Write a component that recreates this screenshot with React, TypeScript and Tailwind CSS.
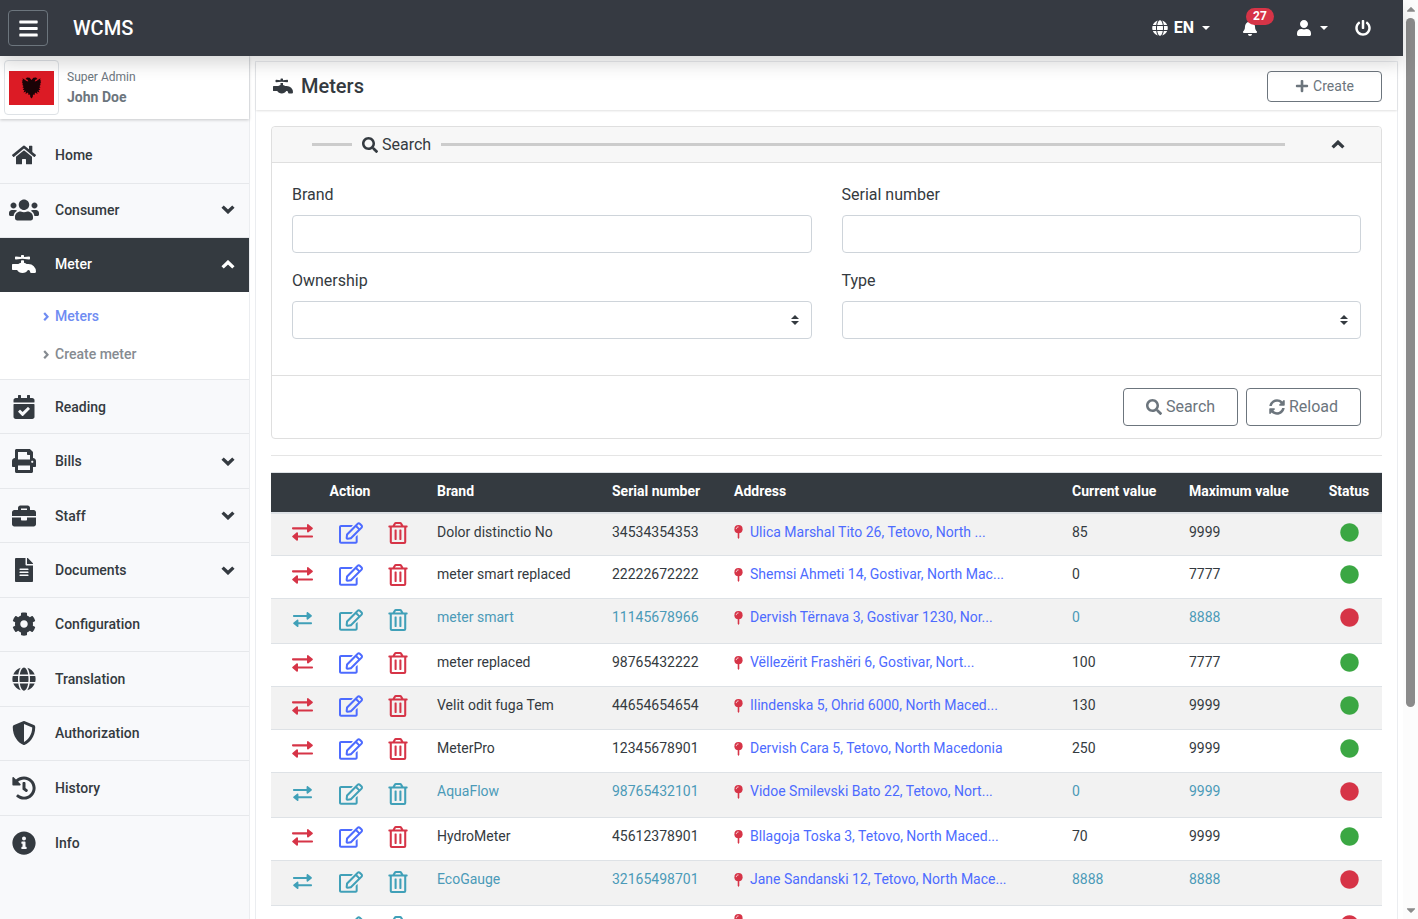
import type { ReactNode } from 'react';
import type { IconType } from 'react-icons';
import {
  FaBars, FaBell, FaBriefcase, FaCalendarCheck, FaCaretDown, FaCaretUp,
  FaCircle, FaCog, FaFaucet, FaFileAlt, FaGlobe, FaHistory, FaHome, FaInfoCircle, FaPlus,
  FaPowerOff, FaPrint, FaRegEdit, FaRegTrashAlt, FaSearch, FaShieldAlt, FaSyncAlt, FaUser, FaUsers,
} from 'react-icons/fa';

type Meter = {
  brand: string;
  serial: string;
  address: string;
  current: string;
  max: string;
  active: boolean;
};

const meters: Meter[] = [
  { brand: 'Dolor distinctio No', serial: '34534354353', address: 'Ulica Marshal Tito 26, Tetovo, North ...', current: '85', max: '9999', active: true },
  { brand: 'meter smart replaced', serial: '22222672222', address: 'Shemsi Ahmeti 14, Gostivar, North Mac...', current: '0', max: '7777', active: true },
  { brand: 'meter smart', serial: '11145678966', address: 'Dervish Tërnava 3, Gostivar 1230, Nor...', current: '0', max: '8888', active: false },
  { brand: 'meter replaced', serial: '98765432222', address: 'Vëllezërit Frashëri 6, Gostivar, Nort...', current: '100', max: '7777', active: true },
  { brand: 'Velit odit fuga Tem', serial: '44654654654', address: 'Ilindenska 5, Ohrid 6000, North Maced...', current: '130', max: '9999', active: true },
  { brand: 'MeterPro', serial: '12345678901', address: 'Dervish Cara 5, Tetovo, North Macedonia', current: '250', max: '9999', active: true },
  { brand: 'AquaFlow', serial: '98765432101', address: 'Vidoe Smilevski Bato 22, Tetovo, Nort...', current: '0', max: '9999', active: false },
  { brand: 'HydroMeter', serial: '45612378901', address: 'Bllagoja Toska 3, Tetovo, North Maced...', current: '70', max: '9999', active: true },
  { brand: 'EcoGauge', serial: '32165498701', address: 'Jane Sandanski 12, Tetovo, North Mace...', current: '8888', max: '8888', active: false },
  { brand: '', serial: '', address: '', current: '', max: '', active: false },
];

const lowerNav: { label: string; icon: IconType; expandable?: boolean }[] = [
  { label: 'Reading', icon: FaCalendarCheck },
  { label: 'Bills', icon: FaPrint, expandable: true },
  { label: 'Staff', icon: FaBriefcase, expandable: true },
  { label: 'Documents', icon: FaFileAlt, expandable: true },
  { label: 'Configuration', icon: FaCog },
  { label: 'Translation', icon: FaGlobe },
  { label: 'Authorization', icon: FaShieldAlt },
  { label: 'History', icon: FaHistory },
  { label: 'Info', icon: FaInfoCircle },
];

function Exchange({ className }: { className: string }) {
  return (
    <svg viewBox="0 0 21 17" fill="currentColor" className={className} aria-hidden="true">
      <path d="M.8 3.2H15V1.1c0-.9.9-1.3 1.5-.7l4.1 3.3c.4.4.4.9 0 1.2l-4.1 3.3c-.6.6-1.5.2-1.5-.7V5.4H.8C.3 5.4 0 5.1 0 4.6V4c0-.5.3-.8.8-.8z" />
      <path d="M20.2 11.4H6V9.3c0-.9-.9-1.3-1.5-.7L.4 11.9c-.4.4-.4.9 0 1.2l4.1 3.3c.6.6 1.5.2 1.5-.7v-2.1h14.2c.5 0 .8-.3.8-.8v-.6c0-.5-.3-.8-.8-.8z" />
    </svg>
  );
}

function Chevron({ direction, className = 'w-3.5' }: { direction: 'up' | 'down' | 'right'; className?: string }) {
  const paths = {
    up: 'M1.600 7.400 7 2.200l5.400 5.200',
    down: 'M1.600 1.600 7 6.800l5.400-5.200',
    right: 'M1.800 1.600 6.800 7l-5 5.400',
  };
  return (
    <svg
      viewBox={direction === 'right' ? '0 0 9 14' : '0 0 14 9'}
      className={className}
      fill="none"
      stroke="currentColor"
      strokeWidth="3.300"
      aria-hidden="true"
    >
      <path d={paths[direction]} />
    </svg>
  );
}

function Pin() {
  return (
    <svg viewBox="0 0 9 14" className="h-3.5 w-[9px]" aria-hidden="true">
      <path d="M3.700 8h1.600v4.800l-.8 1.200-.8-1.200z" fill="#d63447" />
      <circle cx="4.500" cy="4.200" r="4.100" fill="#d63447" />
      <path d="M2.300 4.100c0-1.300 1-2.200 2.200-2.200" fill="none" stroke="#fff" strokeWidth=".8" />
    </svg>
  );
}

function Flag() {
  return (
    <svg viewBox="0 0 45 34" className="w-full" role="img" aria-label="Albania">
      <rect width="45" height="34" fill="#dc1b25" />
      <path
        fill="#1a0306"
        d="M22.500 9 20.600 6.800 18 6.500 16.500 8 18.500 8.800 19.300 10.500 17.500 10 15.500 8.500 13.500 7.200 14 9.500 12.800 9.200 13.600 11.200 12.800 11.500 14 13 13.200 13.800 14.500 15 13.500 16.500 15 17 13.800 19 15.500 19 14.500 21.500 17 20.500 16.500 23 19 21.500 19.500 24 21 23.500 21.300 26 22.500 27.500 23.700 26 24 23.500 25.500 24 26 21.500 28.500 23 28 20.500 30.500 21.500 29.500 19 31.200 19 30 17 31.500 16.500 30.500 15 31.800 13.800 31 13 32.200 11.500 31.400 11.200 32.200 9.200 31 9.500 31.500 7.200 29.500 8.500 27.500 10 25.700 10.500 26.500 8.800 28.500 8 27 6.500 24.400 6.800z"
      />
    </svg>
  );
}

function Caret() {
  return (
    <svg viewBox="0 0 8 4" className="h-1 w-2" fill="currentColor" aria-hidden="true">
      <path d="M0 0h8L4 4z" />
    </svg>
  );
}

function NavItem({ label, icon: Icon, expandable, active, border = true, wide, className = '' }: {
  label: string; icon: IconType; expandable?: boolean; active?: boolean; border?: boolean; wide?: boolean; className?: string;
}) {
  return (
    <a
      href="#"
      className={`flex items-center pl-2 pr-3.5 text-sm font-medium ${active ? 'bg-[#343a40] text-white' : 'text-[#343a40]'} ${border ? 'border-b border-[#e6e8eb]' : ''} ${className}`}
    >
      <span className="flex w-[31px] justify-center">
        <Icon className={wide ? 'size-[30px]' : 'size-6'} />
      </span>
      <span className="ml-4 flex-1">{label}</span>
      {expandable && <Chevron direction={active ? 'up' : 'down'} />}
    </a>
  );
}

function SelectField({ id, label }: { id: string; label: string }) {
  return (
    <div>
      <label htmlFor={id} className="mb-2 block leading-6">{label}</label>
      <div className="relative">
        <select id={id} className="h-[38px] w-full appearance-none rounded border border-[#ced4da] bg-white px-3" />
        <svg viewBox="0 0 8 10" className="pointer-events-none absolute right-[13px] top-3.5 h-2.5 w-2" fill="#343a40" aria-hidden="true">
          <path d="M4 0 0 4h8zM4 10 0 6h8z" />
        </svg>
      </div>
    </div>
  );
}

function TextField({ id, label }: { id: string; label: string }) {
  return (
    <div>
      <label htmlFor={id} className="mb-2 block leading-6">{label}</label>
      <input id={id} type="text" className="h-[38px] w-full rounded border border-[#ced4da] bg-white px-3" />
    </div>
  );
}

function OutlineButton({ children, className }: { children: ReactNode; className: string }) {
  return (
    <button type="button" className={`flex w-[115px] items-center justify-center gap-1 border border-[#6c757d] bg-white text-[#6c757d] ${className}`}>
      {children}
    </button>
  );
}

function MeterRow({ meter, striped }: { meter: Meter; striped: boolean }) {
  const { active } = meter;
  return (
    <tr className={`border-b border-[#dee2e6] align-top leading-[21px] ${striped ? 'bg-[#f2f2f2]' : 'bg-white'} ${active ? 'h-[43px]' : 'h-[45px] text-[#4b9ab8]'}`}>
      <td className="pt-2">
        <div className={`flex h-[22px] items-center ${active ? '' : 'mt-0.5'}`}>
          <button type="button" aria-label="Replace meter" className={`ml-5 flex w-[23px] justify-center ${active ? 'text-[#d63447]' : 'text-[#40a0b8]'}`}>
            <Exchange className={active ? 'w-[21px]' : 'w-[19px]'} />
          </button>
          <button type="button" aria-label="Edit meter" className={`ml-[25px] ${active ? 'text-[#4d6bff]' : 'text-[#40a0b8]'}`}>
            <FaRegEdit className="h-[22px] w-6" />
          </button>
          <button type="button" aria-label="Delete meter" className={`ml-[25px] ${active ? 'text-[#d63447]' : 'text-[#40a0b8]'}`}>
            <FaRegTrashAlt className="h-[22px] w-5" />
          </button>
        </div>
      </td>
      <td className="px-3 pt-2">{meter.brand}</td>
      <td className="px-3 pt-2">{meter.serial}</td>
      <td className="px-3 pt-2">
        <a href="#" className="flex items-center gap-[7px] whitespace-nowrap text-[#4d6bff]">
          <Pin />
          {meter.address}
        </a>
      </td>
      <td className="px-3 pt-2">{meter.current}</td>
      <td className="px-3 pt-2">{meter.max}</td>
      <td className="pt-[9px]">
        <FaCircle className={`mx-auto size-[19px] ${active ? 'text-[#3ba743]' : 'text-[#d63447]'}`} />
      </td>
    </tr>
  );
}

export default function App() {
  return (
    <div className="flex h-screen overflow-hidden bg-white font-[Roboto,sans-serif] text-base text-[#343a40]">
      <div className="flex min-w-0 flex-1 flex-col">
        <header className="relative z-10 flex h-14 shrink-0 items-center bg-[#363a42] px-2 text-white shadow-[0_8px_16px_rgba(0,0,0,0.15)]">
          <button type="button" aria-label="Toggle menu" className="flex h-9 w-10 items-center justify-center rounded border border-[#6c757d]">
            <FaBars className="size-[21px]" />
          </button>
          <span className="ml-[25px] text-xl font-medium">WCMS</span>
          <nav className="ml-auto mr-6 flex items-center pb-px">
            <a href="#" className="flex items-center font-bold">
              <FaGlobe className="size-4" />
              <span className="ml-1.5 mr-2">EN</span>
              <Caret />
            </a>
            <a href="#" aria-label="Notifications" className="relative ml-8">
              <FaBell className="size-4" />
              <span className="absolute -top-3 left-1 rounded-full bg-[#d63447] px-[7px] text-xs font-bold leading-[17px]">27</span>
            </a>
            <a href="#" aria-label="Account" className="ml-[38px] flex items-center gap-2">
              <FaUser className="size-4" />
              <Caret />
            </a>
            <a href="#" aria-label="Log out" className="ml-[27px]">
              <FaPowerOff className="size-4" />
            </a>
          </nav>
        </header>

        <div className="flex min-h-0 flex-1">
          <aside className="flex w-[250px] shrink-0 flex-col border-r border-[#ebedf0] bg-[#f8f9fb]">
            <div className="flex items-start bg-white p-1 shadow-[0_1px_3px_rgba(0,0,0,0.2)]">
              <div className="flex size-[55px] items-center rounded border border-[#dee2e6] bg-white p-1">
                <Flag />
              </div>
              <div className="ml-2 pt-2 text-[#6c757d]">
                <p className="text-xs leading-[18px]">Super Admin</p>
                <p className="text-sm font-bold leading-[22px]">John Doe</p>
              </div>
            </div>
            <nav className="mt-2">
              <NavItem label="Home" icon={FaHome} className="h-[57px]" />
              <NavItem label="Consumer" icon={FaUsers} expandable wide className="h-[54px] pb-0.5" />
              <NavItem label="Meter" icon={FaFaucet} expandable active border={false} className="h-[54px] pb-0.5" />
              <div className="flex flex-col gap-[17px] border-b border-[#e6e8eb] bg-white pb-3.5 pl-[43px] pt-3.5 text-sm font-medium leading-[21px]">
                <a href="#" className="flex items-center gap-1.5 text-[#6f8cf2]">
                  <Chevron direction="right" className="w-1.5" />
                  Meters
                </a>
                <a href="#" className="flex items-center gap-1.5 text-[#868b91]">
                  <Chevron direction="right" className="w-1.5" />
                  Create meter
                </a>
              </div>
              <div className="grid h-[490px] auto-rows-fr">
                {lowerNav.map((item, i) => (
                  <NavItem key={item.label} {...item} border={i < lowerNav.length - 1} />
                ))}
              </div>
            </nav>
          </aside>

          <main className="min-w-0 flex-1 overflow-hidden px-[5px] pt-[5px]">
            <section className="border border-[#ebedf0] bg-white">
              <div className="flex h-12 items-center justify-between pl-[17px] pr-[15px] shadow-[0_1px_2px_rgba(0,0,0,0.12)]">
                <h1 className="flex items-center gap-2 text-xl font-medium leading-6">
                  <FaFaucet className="size-5" />
                  Meters
                </h1>
                <OutlineButton className="h-[31px] rounded-sm text-sm">
                  <FaPlus className="size-3.5" />
                  Create
                </OutlineButton>
              </div>

              <div className="px-[15px] pt-4">
                <form className="rounded border border-[#dfdfdf]">
                  <div className="flex h-9 items-center rounded-t border-b border-[#dfdfdf] bg-[#f7f7f7] pl-10 pr-9">
                    <span className="h-[3px] w-10 bg-[#ccc]" />
                    <h2 className="mx-2.5 flex items-center gap-1">
                      <FaSearch className="size-4" />
                      Search
                    </h2>
                    <span className="mr-[46px] h-[3px] flex-1 bg-[#ccc]" />
                    <button type="button" aria-label="Collapse search">
                      <Chevron direction="up" />
                    </button>
                  </div>
                  <div className="grid grid-cols-2 gap-x-[30px] gap-y-4 px-5 pb-9 pt-5">
                    <TextField id="brand" label="Brand" />
                    <TextField id="serial" label="Serial number" />
                    <SelectField id="ownership" label="Ownership" />
                    <SelectField id="type" label="Type" />
                  </div>
                  <div className="flex justify-end gap-2 border-t border-[#dfdfdf] px-5 py-3">
                    <OutlineButton className="h-[38px] rounded">
                      <FaSearch className="size-4" />
                      Search
                    </OutlineButton>
                    <OutlineButton className="h-[38px] rounded">
                      <FaSyncAlt className="size-4" />
                      Reload
                    </OutlineButton>
                  </div>
                </form>

                <hr className="my-4 border-[#e5e5e5]" />

                <table className="w-full table-fixed border-collapse text-sm">
                  <colgroup>
                    <col className="w-[154px]" />
                    <col className="w-[175px]" />
                    <col className="w-[122px]" />
                    <col />
                    <col className="w-[117px]" />
                    <col className="w-[139px]" />
                    <col className="w-[66px]" />
                  </colgroup>
                  <thead>
                    <tr className="h-10 border-b-2 border-t border-b-[#dee2e6] border-t-[#dee2e6] bg-[#343a40] text-left text-white">
                      <th className="pb-0.5 pl-1 text-center font-bold">Action</th>
                      <th className="px-3 pb-0.5 font-bold">Brand</th>
                      <th className="px-3 pb-0.5 font-bold">Serial number</th>
                      <th className="px-3 pb-0.5 font-bold">Address</th>
                      <th className="px-3 pb-0.5 font-bold">Current value</th>
                      <th className="px-3 pb-0.5 font-bold">Maximum value</th>
                      <th className="px-3 pb-0.5 text-center font-bold">Status</th>
                    </tr>
                  </thead>
                  <tbody>
                    {meters.map((meter, i) => (
                      <MeterRow key={i} meter={meter} striped={i % 2 === 0} />
                    ))}
                  </tbody>
                </table>
              </div>
            </section>
          </main>
        </div>
      </div>

      <div className="flex w-[15px] shrink-0 flex-col items-center bg-[#fcfcfc] text-[#8b8b8b]" aria-hidden="true">
        <FaCaretUp className="my-0.5 size-3.5 shrink-0" />
        <div className="h-[75%] w-[9px] rounded-full bg-[#8b8b8b]" />
        <FaCaretDown className="mb-0.5 mt-auto size-3.5 shrink-0" />
      </div>
    </div>
  );
}
